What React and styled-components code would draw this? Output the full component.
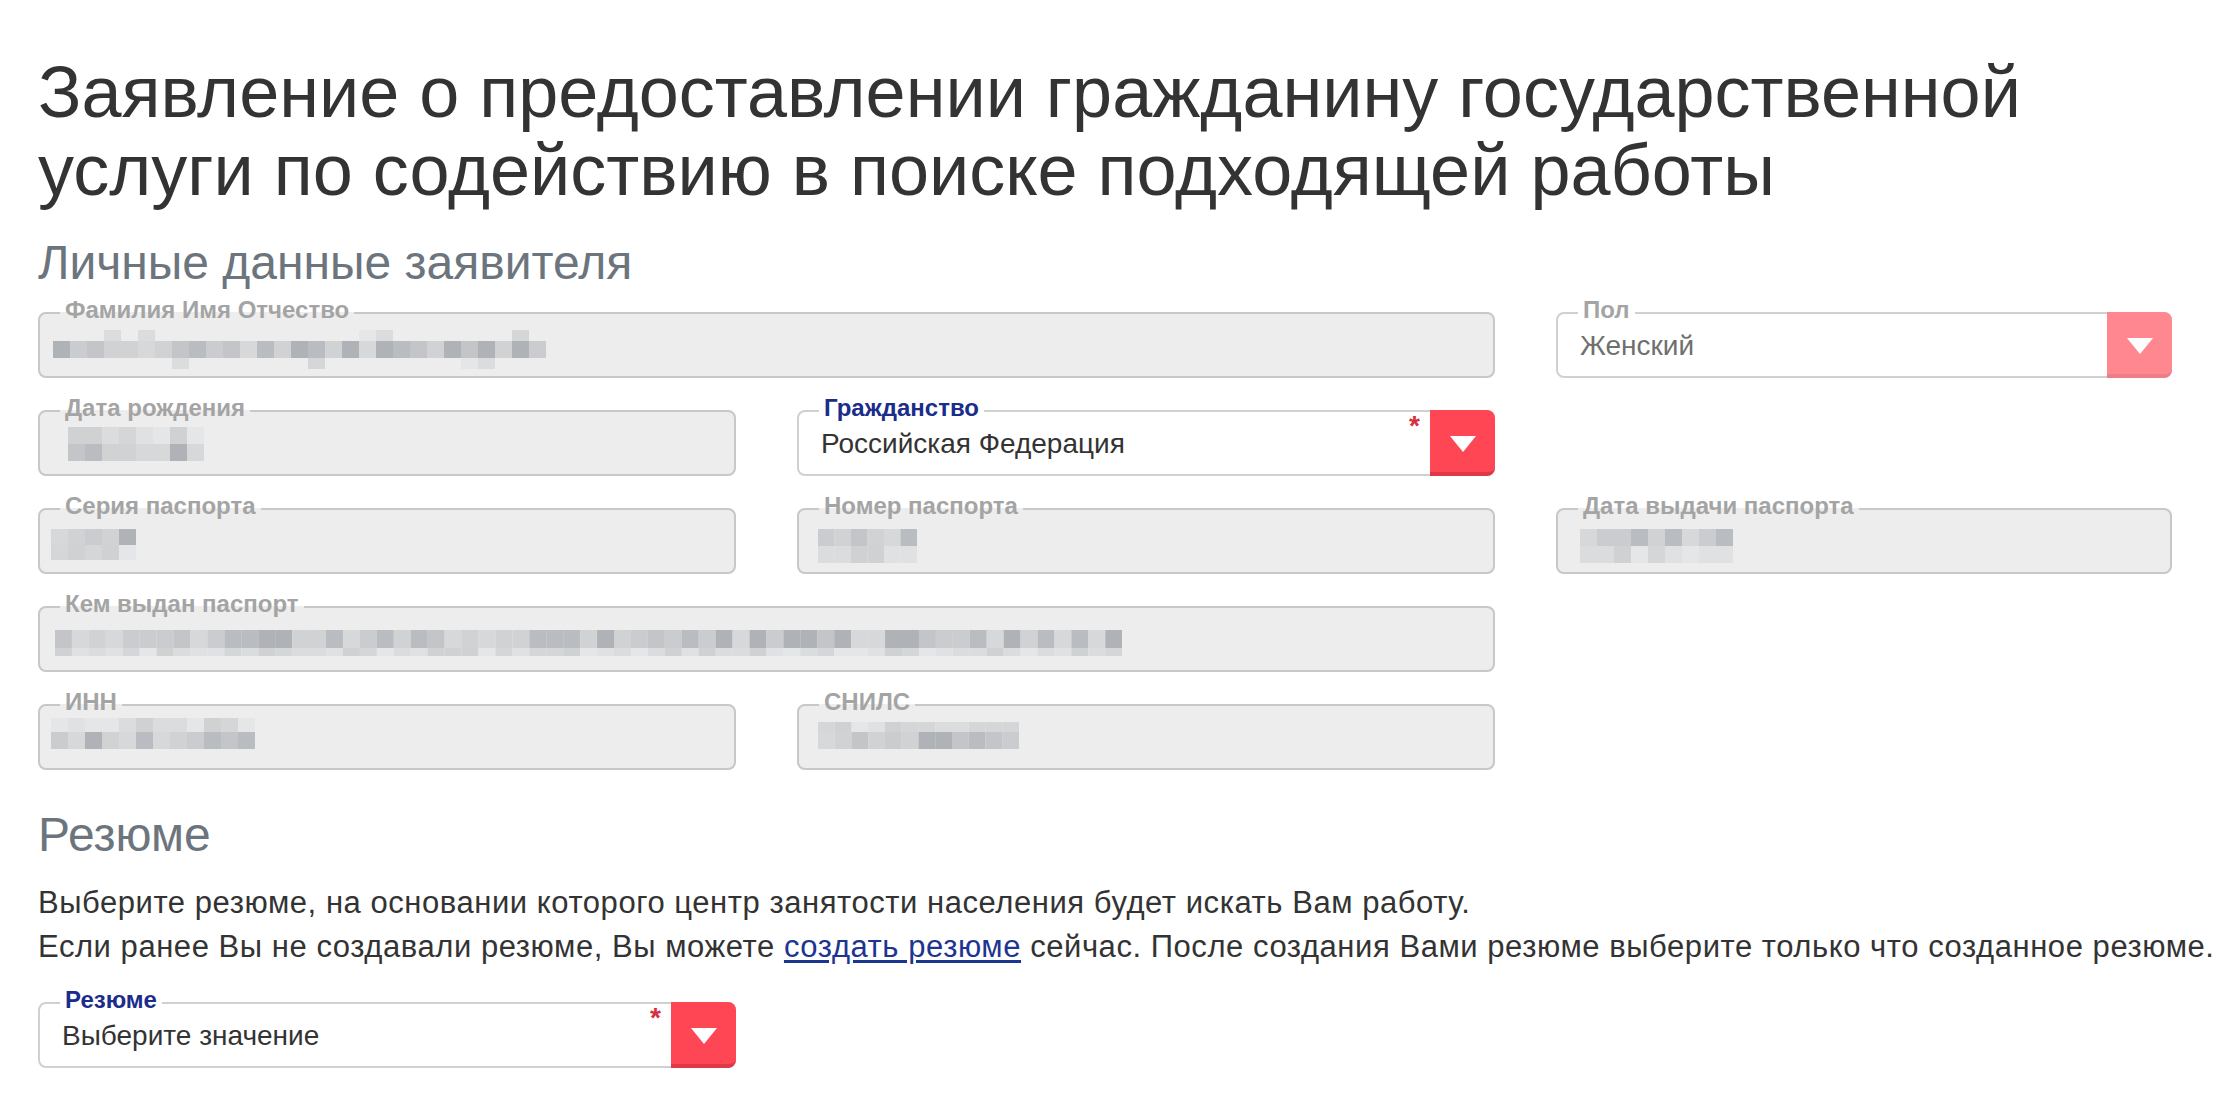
import React from "react";
import styled, { createGlobalStyle } from "styled-components";

const GlobalStyle = createGlobalStyle`
  html, body { margin: 0; padding: 0; background: #fff; }
  body {
    font-family: "Liberation Sans", Arial, Helvetica, sans-serif;
    color: #333;
  }
  * { box-sizing: border-box; }
`;

const Page = styled.main`
  padding: 53px 38px 40px;
  width: 2220px;
`;

const Title = styled.h1`
  margin: 0;
  font-size: 72px;
  line-height: 78px;
  font-weight: 400;
  color: #333;
`;

const SectionTitle = styled.h2`
  margin: ${(p) => p.$top}px 0 0;
  font-size: 48px;
  line-height: 56px;
  font-weight: 400;
  color: #6c757d;
`;

const FormGrid = styled.div`
  margin-top: 8px;
  display: grid;
  grid-template-columns: 698px 698px 616px;
  column-gap: 61px;
  row-gap: 19px;
`;

const Wrap = styled.div`
  position: relative;
  grid-column: ${(p) => (p.$col ? `${p.$col} / span ${p.$span || 1}` : `span ${p.$span || 1}`)};
  width: ${(p) => (p.$width ? `${p.$width}px` : "auto")};
`;

const Box = styled.fieldset`
  margin: 0;
  padding: 0;
  min-width: 0;
  border: 2px solid ${(p) => (p.$disabled ? "#c8c8c8" : "#d0d0d0")};
  border-radius: 8px;
  background: ${(p) => (p.$disabled ? "#ededed" : "#fff")};
`;

const Legend = styled.legend`
  margin-left: 20px;
  padding: 0 5px 6px;
  font-size: 24px;
  line-height: 22px;
  font-weight: 700;
  color: ${(p) => (p.$active ? "#1b2c8a" : "#a4a4a4")};
`;

const Content = styled.div`
  display: flex;
  align-items: center;
  height: 49px;
  padding: 0 90px 12px ${(p) => (p.$indent != null ? p.$indent : 22)}px;
`;

const Value = styled.span`
  font-size: 28px;
  line-height: 32px;
  color: ${(p) => (p.$muted ? "#6f6f6f" : "#333")};
  white-space: nowrap;
`;

const Toggle = styled.span`
  position: absolute;
  right: 0;
  bottom: 0;
  width: 65px;
  height: 66px;
  background: ${(p) => (p.$faded ? "#ff8890" : "#ff4655")};
  border-bottom: 4px solid ${(p) => (p.$faded ? "#ec7e87" : "#dc3846")};
  border-radius: 0 8px 8px 0;
  display: flex;
  align-items: center;
  justify-content: center;

  &::after {
    content: "";
    margin-top: 6px;
    border-left: 13px solid transparent;
    border-right: 13px solid transparent;
    border-top: 16px solid #fff;
  }
`;

const Required = styled.span`
  position: absolute;
  top: 15px;
  right: 75px;
  font-size: 28px;
  line-height: 28px;
  font-weight: 700;
  color: #d6303e;
`;

const Redacted = styled.svg`
  display: block;
  flex: none;
  margin-top: ${(p) => p.$dy || 0}px;
`;

const Text = styled.p`
  margin: 18px 0 0;
  font-size: 31px;
  letter-spacing: 0.55px;
  line-height: 44px;
  color: #333;
  white-space: nowrap;
`;

const Link = styled.a`
  color: #1d3590;
  text-decoration: underline;
  text-underline-offset: 3px;
`;

const ResumeRow = styled.div`
  margin-top: 20px;
  display: flex;
`;

const DARK = ["#afb2b6", "#b9bcc0", "#c3c5c8", "#cacccf", "#d1d2d4", "#d7d8da"];
const LIGHT = ["#d5d6d8", "#dbdcde", "#e0e1e2", "#e5e6e7", "#d0d1d3"];

function rng(seed) {
  let s = seed;
  return () => {
    s = (s * 9301 + 49297) % 233280;
    return s / 233280;
  };
}

function Mosaic({ seed, cols, rows, cell = 17, dy }) {
  const r = rng(seed);
  let y = 0;
  const rects = [];
  rows.forEach((row, ri) => {
    for (let c = 0; c < cols; c++) {
      if (r() < row.d) {
        const pal = row.light ? LIGHT : DARK;
        rects.push(
          <rect key={`${ri}-${c}`} x={c * cell} y={y} width={cell} height={row.h} fill={pal[Math.floor(r() * pal.length)]} />
        );
      }
    }
    y += row.h;
  });
  return (
    <Redacted $dy={dy} width={cols * cell} height={y} viewBox={`0 0 ${cols * cell} ${y}`} aria-hidden="true">
      {rects}
    </Redacted>
  );
}

function Field({ label, span, col, indent, children }) {
  return (
    <Wrap $span={span} $col={col}>
      <Box $disabled>
        <Legend>{label}</Legend>
        <Content $indent={indent}>{children}</Content>
      </Box>
    </Wrap>
  );
}

function Select({ label, value, required, disabled, col, width }) {
  return (
    <Wrap $col={col} $width={width}>
      <Box>
        <Legend $active={!disabled}>{label}</Legend>
        <Content>
          <Value $muted={disabled}>{value}</Value>
        </Content>
      </Box>
      {required && <Required>*</Required>}
      <Toggle $faded={disabled} />
    </Wrap>
  );
}

export default function App() {
  return (
    <>
      <GlobalStyle />
      <Page>
        <Title>
          Заявление о предоставлении гражданину государственной
          <br />
          услуги по содействию в поиске подходящей работы
        </Title>

        <SectionTitle $top={26}>Личные данные заявителя</SectionTitle>

        <FormGrid>
          <Field label="Фамилия Имя Отчество" span={2} indent={13}>
            <Mosaic
              seed={11}
              cols={29}
              dy={7}
              rows={[
                { h: 11, d: 0.25, light: true },
                { h: 17, d: 1 },
                { h: 11, d: 0.12, light: true },
              ]}
            />
          </Field>
          <Select label="Пол" value="Женский" disabled />

          <Field label="Дата рождения" indent={28}>
            <Mosaic seed={5} cols={8} rows={[{ h: 17, d: 1, light: true }, { h: 17, d: 1 }]} />
          </Field>
          <Select label="Гражданство" value="Российская Федерация" required />

          <Field label="Серия паспорта" col={1} indent={11}>
            <Mosaic seed={23} cols={5} dy={5} rows={[{ h: 16, d: 1 }, { h: 15, d: 1, light: true }]} />
          </Field>
          <Field label="Номер паспорта" indent={19}>
            <Mosaic seed={37} cols={6} cell={16.5} dy={8} rows={[{ h: 17, d: 1 }, { h: 17, d: 1, light: true }]} />
          </Field>
          <Field label="Дата выдачи паспорта" indent={22}>
            <Mosaic seed={41} cols={9} dy={8} rows={[{ h: 17, d: 1 }, { h: 17, d: 1, light: true }]} />
          </Field>

          <Field label="Кем выдан паспорт" span={2} indent={15}>
            <Mosaic seed={57} cols={63} cell={16.94} dy={7} rows={[{ h: 18, d: 1 }, { h: 8, d: 1, light: true }]} />
          </Field>

          <Field label="ИНН" col={1} indent={11}>
            <Mosaic seed={73} cols={12} dy={-8} rows={[{ h: 14, d: 1, light: true }, { h: 17, d: 1 }]} />
          </Field>
          <Field label="СНИЛС" indent={19}>
            <Mosaic seed={89} cols={12} cell={16.75} dy={-4} rows={[{ h: 10, d: 1, light: true }, { h: 17, d: 1 }]} />
          </Field>
        </FormGrid>

        <SectionTitle $top={37}>Резюме</SectionTitle>
        <Text>
          Выберите резюме, на основании которого центр занятости населения будет искать Вам работу.
          <br />
          Если ранее Вы не создавали резюме, Вы можете <Link href="#">создать резюме</Link> сейчас. После создания
          Вами резюме выберите только что созданное резюме.
        </Text>

        <ResumeRow>
          <Select label="Резюме" value="Выберите значение" required width={698} />
        </ResumeRow>
      </Page>
    </>
  );
}
